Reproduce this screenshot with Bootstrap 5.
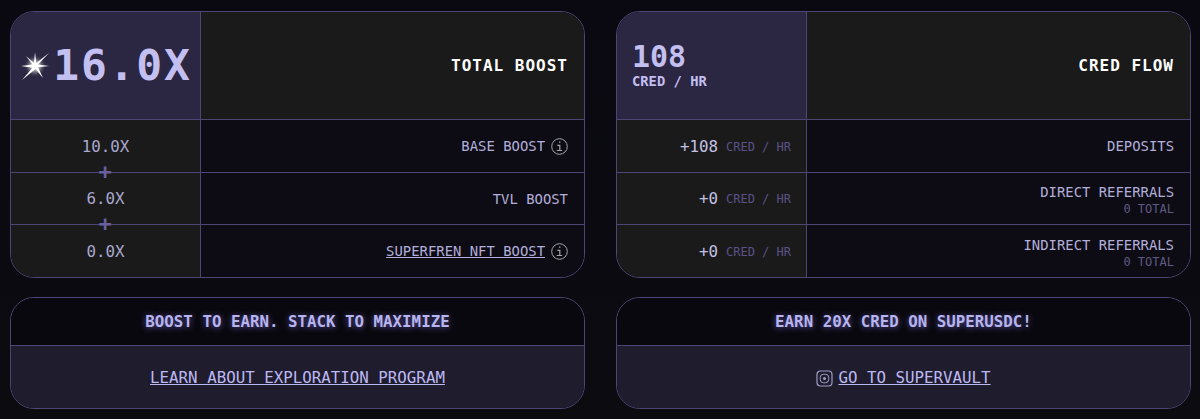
<!DOCTYPE html>
<html lang="en">
<head>
    <meta charset="UTF-8">
    <title>Boost</title>
    <link href="https://cdn.jsdelivr.net/npm/bootstrap@5.3.3/dist/css/bootstrap.min.css" rel="stylesheet">
    <style>
        html, body { height: 100%; }
        body {
            background: linear-gradient(180deg, #0a0911 0%, #0b0b10 100%);
            font-family: "DejaVu Sans Mono", "Liberation Mono", monospace;
            color: #c3bff0;
            font-size: 13.9px;
            overflow: hidden;
        }
        .page-grid {
            display: grid;
            grid-template-columns: 575px 575px;
            column-gap: 31px;
            row-gap: 19px;
            padding: 11px 9px 10px 10px;
        }
        .stat-box, .promo-box {
            border: 1px solid #4d4574;
            border-radius: 24px;
            overflow: hidden;
        }
        .stat-row {
            display: grid;
            grid-template-columns: 190px 1fr;
            height: 53px;
            border-top: 1px solid #4d4574;
            position: relative;
        }
        .stat-row.mid-row { height: 52px; }
        .stat-row.head-row { height: 107px; border-top: 0; }
        .val-cell {
            background: #1a1a1a;
            border-right: 1px solid #4d4574;
            font-size: 15.8px;
            color: #a9a8cf;
            padding-top: 1px;
        }
        .lbl-cell {
            background: #0d0c14;
            padding-top: 1px;
            padding-right: 16px;
            color: #b3afdb;
        }
        .head-row .val-cell { background: #2b2742; color: #c3bff0; padding-top: 0; }
        .head-row .lbl-cell {
            background: #1a1a1a;
            color: #fff;
            font-weight: 700;
            font-size: 16px;
            letter-spacing: 1px;
            padding-top: 0;
        }
        .head-cred { padding-left: 15px; }
        .big-num { font-size: 43px; font-weight: 700; line-height: 1; letter-spacing: 1.8px; }
        .mid-num { font-size: 30px; font-weight: 700; line-height: 1; }
        .unit-top { font-size: 13.8px; font-weight: 700; line-height: 1.2; margin-top: 1px; }
        .flow-val { padding-right: 15px; }
        .flow-val b { font-weight: 400; color: #c3c2e4; }
        .unit-dim { font-size: 12px; color: #5a5288; margin-left: 8px; }
        .lbl-cell.two-line { padding-top: 2px; }
        .sub-dim { font-size: 12px; color: #5f5a82; line-height: 1.2; margin-top: -1px; }
        .plus-sign {
            position: absolute;
            left: 86px;
            top: -9px;
            font-size: 22px;
            line-height: 16px;
            width: 16px;
            text-align: center;
            color: #6a5f9e;
            font-weight: 700;
        }
        .lbl-link { color: #b3afdb; text-decoration: underline; }
        .info-ico { width: 17px; height: 17px; margin-left: 6px; flex: none; }
        .promo-top {
            height: 48px;
            background: #09080e;
            border-bottom: 1px solid #4d4574;
            font-size: 15.8px;
            font-weight: 700;
            color: #b8b4ee;
            text-shadow: 0 1px 6px #5f57a8;
        }
        .promo-bottom {
            height: 62px;
            padding-top: 2px;
            background: #1f1c2e;
            font-size: 15.8px;
        }
        .promo-bottom a { color: #bcb8f2; text-decoration: underline; }
        .vault-ico { width: 17px; height: 17px; margin-right: 5px; }
    </style>
</head>
<body>
<div class="page-grid">

    <!-- Total boost -->
    <div class="stat-box">
        <div class="stat-row head-row">
            <div class="val-cell d-flex align-items-center justify-content-center">
                <svg width="34" height="34" viewBox="0 0 34 34" class="flex-shrink-0">
                    <defs>
                        <filter id="glow" x="-60%" y="-60%" width="220%" height="220%"><feGaussianBlur stdDeviation="2"/></filter>
                    </defs>
                    <circle cx="16" cy="17" r="6.500" fill="#fff" opacity=".75" filter="url(#glow)"/>
                    <path d="M16 3 L17.300 14 L30 4 L19 15.500 L30 17 L19 18.300 L24 29 L16.500 20 L3 31 L13.500 18.800 L2 17 L13.500 15.500 L7 7 L15 14 Z" fill="#fff"/>
                </svg>
                <span class="big-num">16.0X</span>
            </div>
            <div class="lbl-cell d-flex align-items-center justify-content-end">TOTAL BOOST</div>
        </div>
        <div class="stat-row">
            <div class="val-cell d-flex align-items-center justify-content-center">10.0X</div>
            <div class="lbl-cell d-flex align-items-center justify-content-end">BASE BOOST
                <svg class="info-ico" viewBox="0 0 17 17" fill="none" stroke="#a5a5a8"><circle cx="8.500" cy="8.500" r="7.800"/><path d="M6.300 7.300h2.500v5M5.700 12.500h5.400M8 4.200h1.400" stroke-width="1.200"/></svg>
            </div>
        </div>
        <div class="stat-row mid-row">
            <span class="plus-sign">+</span>
            <div class="val-cell d-flex align-items-center justify-content-center">6.0X</div>
            <div class="lbl-cell d-flex align-items-center justify-content-end">TVL BOOST</div>
        </div>
        <div class="stat-row">
            <span class="plus-sign">+</span>
            <div class="val-cell d-flex align-items-center justify-content-center">0.0X</div>
            <div class="lbl-cell d-flex align-items-center justify-content-end"><a href="#" class="lbl-link">SUPERFREN NFT BOOST</a>
                <svg class="info-ico" viewBox="0 0 17 17" fill="none" stroke="#a5a5a8"><circle cx="8.500" cy="8.500" r="7.800"/><path d="M6.300 7.300h2.500v5M5.700 12.500h5.400M8 4.200h1.400" stroke-width="1.200"/></svg>
            </div>
        </div>
    </div>

    <!-- Cred flow -->
    <div class="stat-box">
        <div class="stat-row head-row">
            <div class="val-cell d-flex flex-column justify-content-center head-cred">
                <div class="mid-num">108</div>
                <div class="unit-top">CRED / HR</div>
            </div>
            <div class="lbl-cell d-flex align-items-center justify-content-end">CRED FLOW</div>
        </div>
        <div class="stat-row">
            <div class="val-cell flow-val d-flex align-items-center justify-content-end"><b>+108</b><span class="unit-dim">CRED / HR</span></div>
            <div class="lbl-cell d-flex align-items-center justify-content-end">DEPOSITS</div>
        </div>
        <div class="stat-row mid-row">
            <div class="val-cell flow-val d-flex align-items-center justify-content-end"><b>+0</b><span class="unit-dim">CRED / HR</span></div>
            <div class="lbl-cell two-line d-flex flex-column align-items-end justify-content-center">
                <div>DIRECT REFERRALS</div>
                <div class="sub-dim">0 TOTAL</div>
            </div>
        </div>
        <div class="stat-row">
            <div class="val-cell flow-val d-flex align-items-center justify-content-end"><b>+0</b><span class="unit-dim">CRED / HR</span></div>
            <div class="lbl-cell two-line d-flex flex-column align-items-end justify-content-center">
                <div>INDIRECT REFERRALS</div>
                <div class="sub-dim">0 TOTAL</div>
            </div>
        </div>
    </div>

    <!-- Promos -->
    <div class="promo-box">
        <div class="promo-top d-flex align-items-center justify-content-center">BOOST TO EARN. STACK TO MAXIMIZE</div>
        <div class="promo-bottom d-flex align-items-center justify-content-center"><a href="#">LEARN ABOUT EXPLORATION PROGRAM</a></div>
    </div>
    <div class="promo-box">
        <div class="promo-top d-flex align-items-center justify-content-center">EARN 20X CRED ON SUPERUSDC!</div>
        <div class="promo-bottom d-flex align-items-center justify-content-center">
            <svg class="vault-ico" viewBox="0 0 17 17" fill="none" stroke="#9f9cc4" stroke-width="1.200"><rect x="1" y="1" width="15" height="15" rx="3.500"/><rect x="4.200" y="4.200" width="8.600" height="8.600" rx="3.500" stroke-width="1"/><circle cx="8.500" cy="8.500" r="1.500" fill="#9f9cc4" stroke="none"/></svg>
            <a href="#">GO TO SUPERVAULT</a>
        </div>
    </div>

</div>
</body>
</html>
